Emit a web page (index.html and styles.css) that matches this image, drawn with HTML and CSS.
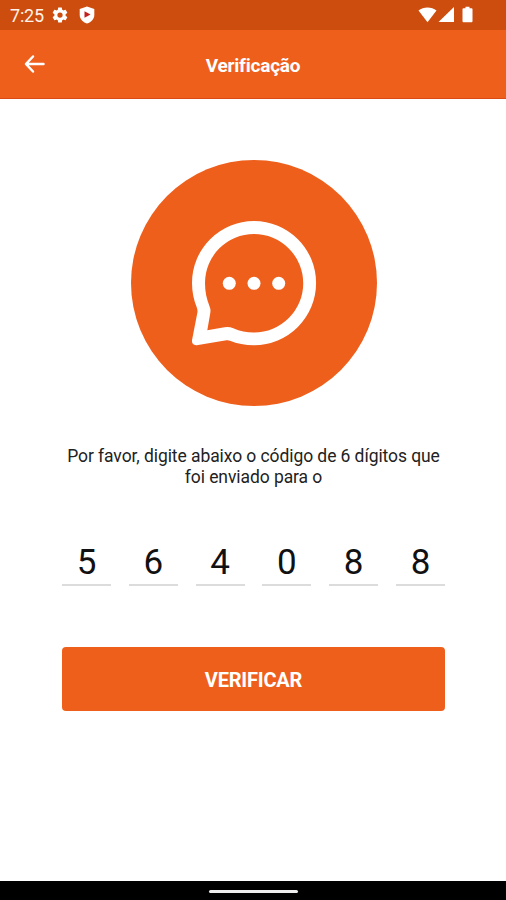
FILE: index.html
```html
<!DOCTYPE html>
<html lang="pt-BR">
<head>
<meta charset="utf-8">
<title>Verificação</title>
<link rel="stylesheet" href="styles.css">
</head>
<body>
<div class="screen">
  <div class="status">
    <span class="time">7:25</span>
    <svg class="gear" width="18" height="18" viewBox="0 0 24 24" fill="#fff"><path d="M19.43 12.98c.04-.32.07-.64.07-.98s-.03-.66-.07-.98l2.11-1.65c.19-.15.24-.42.12-.64l-2-3.46c-.12-.22-.39-.3-.61-.22l-2.49 1c-.52-.4-1.08-.73-1.69-.98l-.38-2.65A.488.488 0 0 0 14 2h-4c-.25 0-.46.18-.49.42l-.38 2.65c-.61.25-1.17.59-1.69.98l-2.49-1c-.23-.09-.49 0-.61.22l-2 3.46c-.13.22-.07.49.12.64l2.11 1.65c-.04.32-.07.65-.07.98s.03.66.07.98l-2.11 1.65c-.19.15-.24.42-.12.64l2 3.46c.12.22.39.3.61.22l2.49-1c.52.4 1.08.73 1.69.98l.38 2.65c.03.24.24.42.49.42h4c.25 0 .46-.18.49-.42l.38-2.65c.61-.25 1.17-.59 1.69-.98l2.49 1c.23.09.49 0 .61-.22l2-3.46c.12-.22.07-.49-.12-.64zM12 15.5a3.5 3.5 0 1 1 0-7 3.5 3.5 0 0 1 0 7z"/></svg>
    <svg class="shield" width="16" height="18" viewBox="0 0 16 18"><path d="M8 .4 15.3 3v6c0 4-3 7-7.3 8.6C3.700 16 .7 13 .7 9V3z" fill="#fff"/><path d="M5.500 5.200v6.600l6-3.300z" fill="#c4201c"/></svg>
    <span class="spacer"></span>
    <svg class="signals" width="56" height="18" viewBox="0 0 56 18" fill="#fff"><path d="M.5 4.600C5.500.5 13.500.5 18.500 4.600L9.500 16.200z"/><path d="M36 1v15H20.500z"/><path d="M45.500 2.200h2V.8h4v1.400h2q1 0 1 1v12q0 1-1 1h-8q-1 0-1-1v-12q0-1 1-1z"/></svg>
  </div>
  <header class="bar">
    <svg class="back" width="22" height="20" viewBox="0 0 22 20" fill="none" stroke="#fff" stroke-width="2.500" stroke-linecap="round" stroke-linejoin="round"><path d="M19.500 10H2.500M9 2.500 2 10l7 7.500"/></svg>
    <h1>Verificação</h1>
  </header>
  <main>
    <svg class="hero" width="246" height="246" viewBox="0 0 246 246">
      <circle cx="123" cy="123" r="123" fill="#ee5f1c"/>
      <path fill="#fff" fill-rule="evenodd" d="M123 61A62 62 0 0 1 123 185.200C114 185.200 106 183.600 99 180.700Q97.300 180 95.500 180.300L65.700 185.200Q60.500 185.500 61 180.200L66.400 152.500Q66.800 150.300 65.800 147.500C62.700 140 61 132 61 123A62 62 0 0 1 123 61ZM123 74A49 49 0 0 0 74 123C74 131.500 75.600 139 78.600 146.500Q79.900 149.500 79.300 153L76.300 170.300 93.500 167.200Q98 166.400 102.300 168.200C109 171.200 115.500 172.500 123 172.500A49.200 49.200 0 0 0 123 74Z"/>
      <g fill="#fff"><circle cx="98.300" cy="123.300" r="6.500"/><circle cx="123" cy="123.300" r="6.500"/><circle cx="147.700" cy="123.300" r="6.500"/></g>
    </svg>
    <p class="hint">Por favor, digite abaixo o código de 6 dígitos que<br>foi enviado para o</p>
    <div class="code">
      <span>5</span><span>6</span><span>4</span><span>0</span><span>8</span><span>8</span>
    </div>
    <button class="verify" type="button">VERIFICAR</button>
  </main>
  <footer class="nav"><span class="pill"></span></footer>
</div>
</body>
</html>
```
FILE: styles.css
```css
* { box-sizing: border-box; }
body { margin: 0; background: #fff; font-family: Roboto, "Liberation Sans", sans-serif; }
.screen { width: 506px; height: 900px; display: flex; flex-direction: column; overflow: hidden; }
.status { height: 30px; background: #cd4d0e; display: flex; align-items: center; padding: 0 32px 0 10px; flex: none; }
.time { color: #fff3ea; font-size: 18px; line-height: 30px; width: 41px; letter-spacing: -0.2px; padding-top: 2px; }
.shield { margin-left: 10px; }
.spacer { flex: 1; }
.bar { height: 69px; background: #ee5f1c; border-bottom: 1px solid #da4a14; display: grid; grid-template-columns: 70px 1fr 70px; align-items: center; flex: none; }
.back { margin-left: 24px; }
.bar h1 { margin: 4px 0 0; font-size: 19px; line-height: 24px; font-weight: 700; color: #fff; text-align: center; letter-spacing: -0.2px; }
main { flex: 1; padding: 61px 61px 0 62px; display: flex; flex-direction: column; align-items: center; }
.hero { flex: none; }
.hint { margin: 40px 0 0; font-size: 17.500px; line-height: 20.500px; letter-spacing: -0.08px; color: #222; text-align: center; white-space: nowrap; }
.code { width: 383px; margin-top: 54px; display: flex; justify-content: space-between; }
.code span { width: 49px; height: 45px; border-bottom: 2px solid #dcdcdc; text-align: center; font-size: 35px; line-height: 43px; color: #111; }
.verify { width: 383px; height: 64px; margin-top: 61px; padding: 2px 0 0; border: 0; border-radius: 4px; background: #ee5f1c; color: #fff; font: 700 20px/24px Roboto, "Liberation Sans", sans-serif; letter-spacing: -0.2px; }
.nav { height: 19px; background: #000; display: flex; justify-content: center; align-items: center; padding-top: 2px; flex: none; }
.pill { width: 89px; height: 3px; border-radius: 2px; background: #eee; }
```
